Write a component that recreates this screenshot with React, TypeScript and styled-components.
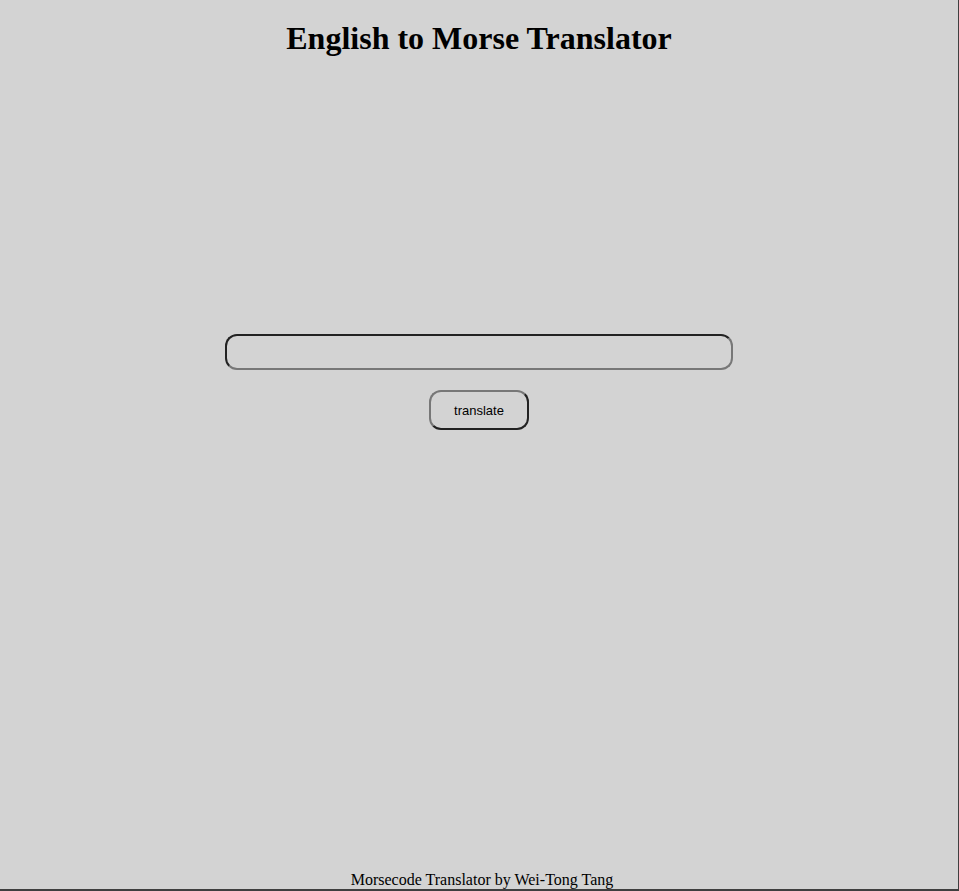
import styled, { createGlobalStyle } from 'styled-components'

const GlobalStyle = createGlobalStyle`
  html, body {
    margin: 0;
    padding: 0;
    background: #d3d3d3;
  }
`

const Page = styled.div`
  box-sizing: border-box;
  min-height: 100vh;
  display: flex;
  flex-direction: column;
  align-items: center;
  border-right: 1px solid #3f3f3f;
  border-bottom: 2px solid #3f3f3f;
  font-family: 'Liberation Serif', 'Times New Roman', serif;
  color: #000;
`

const Title = styled.h1`
  margin: 20px 0 0;
  font-size: 32px;
  line-height: 37px;
  font-weight: bold;
  text-align: center;
`

const Form = styled.form`
  flex: 1;
  display: flex;
  flex-direction: column;
  align-items: center;
  gap: 20px;
  padding-top: 277px;
`

const Input = styled.input`
  box-sizing: border-box;
  width: 508px;
  height: 36px;
  border: 2px solid;
  border-color: #222 #777 #777 #222;
  border-radius: 12px;
  background: transparent;
  padding: 0 12px;
  font: 14px 'Liberation Sans', Arial, sans-serif;
  outline: none;
`

const Button = styled.button`
  box-sizing: border-box;
  width: 100px;
  height: 40px;
  border: 2px solid;
  border-color: #777 #222 #222 #777;
  border-radius: 12px;
  background: transparent;
  font: 13px 'Liberation Sans', Arial, sans-serif;
  color: #000;
  cursor: pointer;
`

const Footer = styled.footer`
  font-size: 16px;
  line-height: 18px;
  padding-left: 6px;
  text-align: center;
`

export default function App() {
  return (
    <>
      <GlobalStyle />
      <Page>
        <Title>English to Morse Translator</Title>
        <Form onSubmit={e => e.preventDefault()}>
          <Input type='text' />
          <Button type='submit'>translate</Button>
        </Form>
        <Footer>Morsecode Translator by Wei-Tong Tang</Footer>
      </Page>
    </>
  )
}
